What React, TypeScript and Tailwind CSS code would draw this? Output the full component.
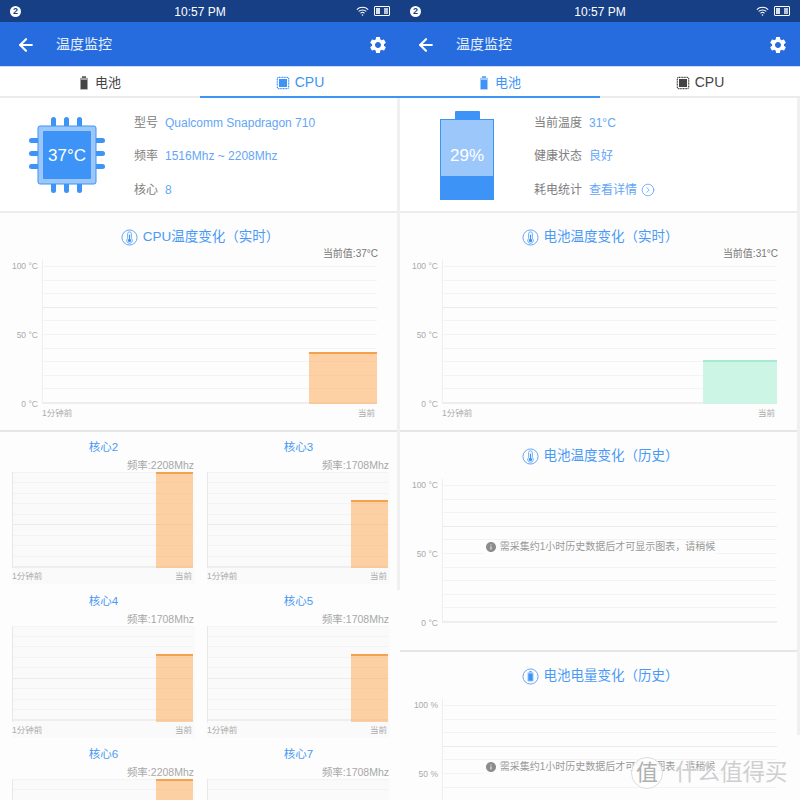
import { ArrowLeft, CircleChevronRight } from 'lucide-react';
import { MdInfo, MdSettings } from 'react-icons/md';

const FONT = 'font-["Liberation_Sans","Noto_Sans_CJK_SC",sans-serif]';

function WifiIcon() {
  return (
    <svg viewBox="0 0 16 12" className="w-[13px] h-[10px]" fill="none" stroke="white" strokeWidth="1.3">
      <path d="M1 4.2a10 10 0 0 1 14 0" />
      <path d="M3.3 6.6a6.8 6.8 0 0 1 9.4 0" />
      <path d="M5.6 8.8a3.4 3.4 0 0 1 4.8 0" />
      <circle cx="8" cy="10.8" r="0.9" fill="white" stroke="none" />
    </svg>
  );
}

function StatusBar() {
  return (
    <div className="h-[22px] bg-[#173f85] flex items-center justify-between pl-[10px] pr-[10px] relative text-white">
      <div className="w-[11px] h-[11px] rounded-full bg-white text-[#173f85] text-[9px] font-bold flex items-center justify-center leading-none">
        2
      </div>
      <div className="absolute left-0 right-0 top-[1px] text-center text-[12px] leading-[22px]">10:57 PM</div>
      <div className="flex items-center gap-[5px]">
        <WifiIcon />
        <div className="w-[16px] h-[10px] border border-white rounded-[1px] flex justify-between p-[1px]">
          <div className="w-[4px] bg-white/85 h-full" />
          <div className="w-[4px] bg-white/70 h-full" />
        </div>
      </div>
    </div>
  );
}

function ChipGlyph({ color }: { color: string }) {
  return (
    <svg viewBox="0 0 14 14" className="w-[14px] h-[14px]">
      <rect x="1.3" y="1.3" width="11.4" height="11.4" rx="1.6" fill="none" stroke={color} strokeWidth="1.2" strokeDasharray="1.1 0.5" />
      <rect x="3" y="3" width="8" height="8" fill={color} />
    </svg>
  );
}

function BatteryGlyph({ color }: { color: string }) {
  return (
    <svg viewBox="0 0 10 14" className="w-[10px] h-[14px]" fill={color}>
      <rect x="3" y="0.3" width="4" height="1.5" />
      <rect x="1" y="1.8" width="8" height="12" rx="0.8" fillOpacity="0.5" />
      <rect x="2" y="4" width="6" height="9" />
    </svg>
  );
}

function Header({ active }: { active: 'battery' | 'cpu' }) {
  const on = 'text-[#3d94f6] border-[#3d94f6]';
  const off = 'text-[#444444] border-[#ebebeb]';
  return (
    <>
      <StatusBar />
      <div className="h-[44px] pt-[1px] bg-[#266cdf] flex items-center text-white">
        <ArrowLeft className="w-[20px] h-[20px] ml-[16px]" strokeWidth={2.6} />
        <div className="ml-[20px] text-[14px] text-white/90">温度监控</div>
        <MdSettings className="w-[20px] h-[20px] ml-auto mr-[12px]" />
      </div>
      <div className="h-[32px] flex bg-white border-t border-[#4f8ce6]/30">
        <div className={`w-[200px] pt-[2px] flex items-center justify-center gap-[6px] text-[13px] border-b-2 ${active === 'battery' ? on : off}`}>
          <BatteryGlyph color={active === 'battery' ? '#3d94f6' : '#444444'} />
          电池
        </div>
        <div className={`w-[200px] pt-[2px] flex items-center justify-center gap-[5px] text-[14px] border-b-2 ${active === 'cpu' ? on : off}`}>
          <ChipGlyph color={active === 'cpu' ? '#3d94f6' : '#444444'} />
          CPU
        </div>
      </div>
    </>
  );
}

function InfoRow({ label, children }: { label: string; children: React.ReactNode }) {
  return (
    <div className="flex items-center gap-[7px] h-[33.5px] text-[12px]">
      <span className="text-[#808080]">{label}</span>
      <span className="text-[#64a6f6] flex items-center gap-[4px]">{children}</span>
    </div>
  );
}

function CpuPicture() {
  return (
    <div className="w-[76px] h-[76px] relative">
      <svg viewBox="0 0 76 76" className="w-full h-full" fill="#3d94f6">
        {[22, 35, 48].map((p) => (
          <g key={p}>
            <rect x={p} y="0" width="5" height="12" rx="2.5" />
            <rect x={p} y="64" width="5" height="12" rx="2.5" />
            <rect x="0" y={p - 1} width="12" height="5" rx="2.5" />
            <rect x="64" y={p - 1} width="12" height="5" rx="2.5" />
          </g>
        ))}
        <rect x="9" y="9" width="58" height="58" rx="2" fill="#9cc7fb" stroke="#3d94f6" />
        <rect x="14" y="14" width="48" height="48" rx="1" />
      </svg>
      <div className="absolute inset-0 pt-[2px] flex items-center justify-center text-white text-[17px]">37°C</div>
    </div>
  );
}

function BatteryPicture() {
  return (
    <div className="w-[54px] flex flex-col items-center">
      <div className="w-[25px] h-[8px] bg-[#3d94f6] rounded-t-[1px]" />
      <div className="w-[54px] h-[81px] border border-[#3d94f6] flex flex-col">
        <div className="flex-1 bg-[#9cc7fb] flex items-center justify-center text-white text-[17px] pt-[16px]">29%</div>
        <div className="h-[23px] bg-[#3d94f6]" />
      </div>
    </div>
  );
}

function ThermoIcon() {
  return (
    <svg viewBox="0 0 18 18" className="w-[17px] h-[17px]" fill="none" stroke="#5aa0f5">
      <circle cx="9" cy="9" r="8" />
      <path d="M7 10V5a2 2 0 0 1 4 0v5a3 3 0 1 1-4 0z" strokeWidth="0.9" />
      <circle cx="9" cy="12.2" r="1.8" fill="#3d94f6" stroke="none" />
      <rect x="8.4" y="6" width="1.2" height="6" fill="#3d94f6" stroke="none" />
    </svg>
  );
}

function BatteryCircleIcon() {
  return (
    <svg viewBox="0 0 18 18" className="w-[17px] h-[17px]" fill="none" stroke="#5aa0f5">
      <circle cx="9" cy="9" r="8" />
      <rect x="7.6" y="3.4" width="2.8" height="1.2" fill="#3d94f6" stroke="none" />
      <rect x="5.8" y="4.6" width="6.4" height="9.6" rx="0.6" fill="#9cc7fb" stroke="none" />
      <rect x="6.8" y="6" width="4.4" height="7.4" fill="#3d94f6" stroke="none" />
    </svg>
  );
}

function SectionTitle({ icon, children }: { icon: React.ReactNode; children: React.ReactNode }) {
  return (
    <div className="h-[20px] pt-[1px] flex items-center justify-center gap-[5px] text-[13.5px] text-[#4a9af5]">
      {icon}
      <span>{children}</span>
    </div>
  );
}

// one line in each chart is a touch darker, the last one is the axis
function Lines({ count, strong }: { count: number; strong: number }) {
  return (
    <div className="h-full flex flex-col justify-between">
      {Array.from({ length: count }, (_, i) => (
        <div
          key={i}
          className={
            i === count - 1
              ? 'h-[2px] bg-[#eeeeee]'
              : i === strong
                ? 'h-px bg-[#ebebeb]'
                : 'h-px bg-[#f3f3f3]'
          }
        />
      ))}
    </div>
  );
}

type BigChartProps = {
  unit: string;
  barHeight?: number;
  barClass?: string;
  axis?: boolean;
  waiting?: boolean;
};

function BigChart({ unit, barHeight, barClass, axis, waiting }: BigChartProps) {
  return (
    <div className="relative">
      <div className="flex">
        <div className="w-[38px] mt-[1px] h-[148px] flex flex-col justify-between text-[8.5px] leading-[10px] text-[#aaaaaa] text-right">
          <span>100 {unit}</span>
          <span>50 {unit}</span>
          <span>0 {unit}</span>
        </div>
        <div className="ml-[4px] w-[335px] h-[144px] pt-[6px] border-l border-[#eeeeee] relative">
          <Lines count={11} strong={3} />
          {barHeight ? (
            <div className={`absolute right-0 bottom-0 border-t-2 ${barClass}`} style={{ height: barHeight }} />
          ) : null}
        </div>
      </div>
      {axis && (
        <div className="-mt-[4px] ml-[42px] w-[335px] flex justify-between text-[8.5px] leading-[16px] text-[#aaaaaa]">
          <span>1分钟前</span>
          <span className="pr-[2px]">当前</span>
        </div>
      )}
      {waiting && (
        <div className="absolute left-0 right-0 top-[61px] flex justify-center">
          <div className="flex items-center gap-[3px] bg-[#fdfdfd] text-[10px] leading-[14px] text-[#999999] px-[1px]">
            <MdInfo className="w-[12px] h-[12px] text-[#8c8c8c]" />
            需采集约1小时历史数据后才可显示图表，请稍候
          </div>
        </div>
      )}
    </div>
  );
}

function CoreChart({ name, freq, barHeight }: { name: string; freq: number; barHeight: number }) {
  return (
    <div className="h-[153.5px]">
      <div className="pt-[8px] h-[24px] text-center text-[11.5px] leading-[14px] text-[#4a9af5]">{name}</div>
      <div className="h-[16px] pt-[1px] pr-[1px] text-right text-[10.5px] leading-[16px] text-[#a8a8a8]">频率:{freq}Mhz</div>
      <div className="bg-[#fafafa]">
        <div className="w-[181px] h-[96px] border-l border-[#e8e8e8] relative">
          <Lines count={10} strong={5} />
          <div
            className="absolute right-0 bottom-0 w-[37px] bg-[#fda54b]/50 border-t-2 border-[#f5a14e]"
            style={{ height: barHeight }}
          />
        </div>
        <div className="w-[181px] flex justify-between text-[8.5px] leading-[16px] text-[#aaaaaa]">
          <span>1分钟前</span>
          <span className="pr-[1px]">当前</span>
        </div>
      </div>
    </div>
  );
}

function ScrollThumb({ className }: { className: string }) {
  return <div className={`absolute right-0 top-[98px] w-[3px] bg-[#f0f0f0] ${className}`} />;
}

const CORES = [
  { name: '核心2', freq: 2208, barHeight: 96 },
  { name: '核心3', freq: 1708, barHeight: 68 },
  { name: '核心4', freq: 1708, barHeight: 68 },
  { name: '核心5', freq: 1708, barHeight: 68 },
  { name: '核心6', freq: 2208, barHeight: 96 },
  { name: '核心7', freq: 1708, barHeight: 68 },
];

function CpuPage() {
  return (
    <div className="w-[400px] h-[800px] overflow-hidden relative bg-[#fdfdfd]">
      <Header active="cpu" />
      <div className="h-[115px] bg-white border-b-2 border-[#ececec] flex">
        <div className="w-[134px] pl-[29px] pt-[19px]">
          <CpuPicture />
        </div>
        <div className="pt-[8px]">
          <InfoRow label="型号">Qualcomm Snapdragon 710</InfoRow>
          <InfoRow label="频率">1516Mhz ~ 2208Mhz</InfoRow>
          <InfoRow label="核心">8</InfoRow>
        </div>
      </div>
      <div className="h-[219px] pt-[14px] border-b-2 border-[#e6e6e6]">
        <SectionTitle icon={<ThermoIcon />}>CPU温度变化（实时）</SectionTitle>
        <div className="h-[13px] pr-[22px] text-right text-[10px] leading-[13px] text-[#777777]">当前值:37°C</div>
        <BigChart unit="°C" barHeight={52} barClass="w-[68px] bg-[#fda54b]/50 border-[#f5a14e]" axis />
      </div>
      <div className="pl-[12px] pr-[10px] grid grid-cols-2 gap-x-[12px]">
        {CORES.map((core) => (
          <CoreChart key={core.name} {...core} />
        ))}
      </div>
      <ScrollThumb className="h-[492px]" />
    </div>
  );
}

function BatteryPage() {
  return (
    <div className="w-[400px] h-[800px] overflow-hidden relative bg-[#fdfdfd]">
      <Header active="battery" />
      <div className="h-[115px] bg-white border-b-2 border-[#ececec] flex">
        <div className="w-[134px] pl-[40px] pt-[13px]">
          <BatteryPicture />
        </div>
        <div className="pt-[8px]">
          <InfoRow label="当前温度">31°C</InfoRow>
          <InfoRow label="健康状态">良好</InfoRow>
          <InfoRow label="耗电统计">
            查看详情
            <CircleChevronRight className="w-[14px] h-[14px]" strokeWidth={1.4} />
          </InfoRow>
        </div>
      </div>
      <div className="h-[219px] pt-[14px] border-b-2 border-[#e6e6e6]">
        <SectionTitle icon={<ThermoIcon />}>电池温度变化（实时）</SectionTitle>
        <div className="h-[13px] pr-[22px] text-right text-[10px] leading-[13px] text-[#777777]">当前值:31°C</div>
        <BigChart unit="°C" barHeight={44} barClass="w-[74px] bg-[#cdf5e6] border-[#a9e8d2]" axis />
      </div>
      <div className="h-[220px] pt-[14px] border-b-2 border-[#e6e6e6]">
        <SectionTitle icon={<ThermoIcon />}>电池温度变化（历史）</SectionTitle>
        <div className="h-[13px]" />
        <BigChart unit="°C" waiting />
      </div>
      <div className="pt-[14px]">
        <SectionTitle icon={<BatteryCircleIcon />}>电池电量变化（历史）</SectionTitle>
        <div className="h-[13px]" />
        <BigChart unit="%" waiting />
      </div>
      <ScrollThumb className="h-[637px]" />
      <div className="absolute left-[231px] top-[757px] w-[32px] h-[32px] rounded-full bg-white/90 border border-[#dddddd] flex items-center justify-center text-[22px] leading-none text-[#b0b0b0]">
        值
      </div>
      <div className="absolute left-[275px] top-[758px] text-[22.5px] leading-[30px] text-[#cfcfcf] [text-shadow:0_0_2px_#ffffff]">
        什么值得买
      </div>
    </div>
  );
}

export default function App() {
  return (
    <div className={`w-[800px] h-[800px] overflow-hidden flex ${FONT}`}>
      <CpuPage />
      <BatteryPage />
    </div>
  );
}
